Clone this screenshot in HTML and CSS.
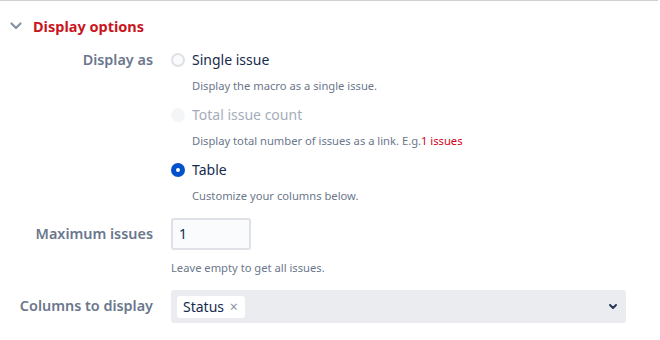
FILE: index.html
```html
<!DOCTYPE html>
<html lang="en">
<head>
<meta charset="utf-8">
<title>Display options</title>
<link rel="stylesheet" href="styles.css">
</head>
<body>
<div class="panel">
  <div class="section-head">
    <svg class="chev" width="12" height="8" viewBox="0 0 12 8"><path d="M1.5 1.5 L6 6 L10.5 1.5" fill="none" stroke="#8993a4" stroke-width="2.2" stroke-linecap="round" stroke-linejoin="round"/></svg>
    <h2 class="section-title">Display options</h2>
  </div>
  <div class="form">
    <div class="row">
      <div class="label label-radio">Display as</div>
      <div class="field">
        <div class="radio-item">
          <span class="radio"></span><span class="radio-text">Single issue</span>
        </div>
        <div class="help">Display the macro as a single issue.</div>
        <div class="radio-item disabled">
          <span class="radio"></span><span class="radio-text">Total issue count</span>
        </div>
        <div class="help">Display total number of issues as a link. E.g.<span class="link">1 issues</span></div>
        <div class="radio-item">
          <span class="radio checked"></span><span class="radio-text">Table</span>
        </div>
        <div class="help">Customize your columns below.</div>
      </div>
    </div>
    <div class="row row-max">
      <div class="label">Maximum issues</div>
      <div class="field">
        <div class="text-input">1</div>
        <div class="help help-input">Leave empty to get all issues.</div>
      </div>
    </div>
    <div class="row row-cols">
      <div class="label">Columns to display</div>
      <div class="field">
        <div class="select">
          <span class="tag">Status <span class="tag-x">×</span></span>
          <svg class="select-chev" width="10" height="7" viewBox="0 0 10 7"><path d="M2 2 L5 5 L8 2" fill="none" stroke="#253858" stroke-width="2" stroke-linecap="round" stroke-linejoin="round"/></svg>
        </div>
      </div>
    </div>
  </div>
</div>
</body>
</html>
```
FILE: styles.css
```css
html, body {
  margin: 0;
  padding: 0;
  background: #fff;
}
body {
  font-family: "Noto Sans", "Open Sans", sans-serif;
  color: #172b4d;
}
.panel {
  border-top: 1px solid #cfcfcf;
  width: 658px;
  height: 339px;
}
.section-head {
  display: flex;
  align-items: center;
  height: 24px;
  margin-top: 13px;
  padding-left: 10px;
}
.chev {
  display: block;
  margin-right: 11px;
}
.section-title {
  margin: 0;
  font-size: 14.5px;
  font-weight: 700;
  color: #c9151e;
  line-height: 24px;
}
.form {
  margin-top: 10px;
}
.row {
  display: grid;
  grid-template-columns: 153px 1fr;
  column-gap: 18px;
}
.label {
  text-align: right;
  font-size: 14.4px;
  font-weight: 600;
  color: #6b778c;
  line-height: 32px;
}
.label-radio {
  line-height: 24px;
}
.field {
  padding-right: 32px;
}
.radio-item {
  display: flex;
  align-items: center;
  height: 24px;
}
.radio {
  box-sizing: border-box;
  width: 14px;
  height: 14px;
  border-radius: 50%;
  border: 2px solid #dfe1e6;
  background: #fafbfc;
  margin-right: 7px;
  position: relative;
}
.radio.checked {
  border: none;
  background: #0052cc;
}
.radio.checked::after {
  content: "";
  position: absolute;
  left: 5px;
  top: 5px;
  width: 4px;
  height: 4px;
  border-radius: 50%;
  background: #fff;
}
.disabled .radio {
  background: #f4f5f7;
  border-color: #f4f5f7;
}
.radio-text {
  font-size: 14px;
  line-height: 24px;
}
.disabled .radio-text {
  color: #a5adba;
}
.help {
  font-size: 11.2px;
  line-height: 17px;
  color: #6b778c;
  padding: 5px 0 0 21px;
  margin-bottom: 9px;
}
.link {
  color: #d0021b;
}
.row-max {
  margin-top: 5px;
}
.text-input {
  box-sizing: border-box;
  width: 80px;
  height: 32px;
  border: 2px solid #dfe1e6;
  border-radius: 3px;
  background: #fafbfc;
  font-size: 14px;
  line-height: 28px;
  padding-left: 6px;
}
.help-input {
  padding: 9px 0 0 0;
  margin-bottom: 14px;
}
.select {
  box-sizing: border-box;
  height: 33px;
  border-radius: 3px;
  background: #ebecf0;
  display: flex;
  align-items: center;
  padding: 0 8px 0 6px;
}
.tag {
  background: #fff;
  border-radius: 3px;
  font-size: 14px;
  line-height: 22px;
  padding: 0 7px 0 6px;
  color: #172b4d;
}
.tag-x {
  color: #8993a4;
  font-size: 14px;
  margin-left: 2px;
}
.select-chev {
  margin-left: auto;
  display: block;
}
```
